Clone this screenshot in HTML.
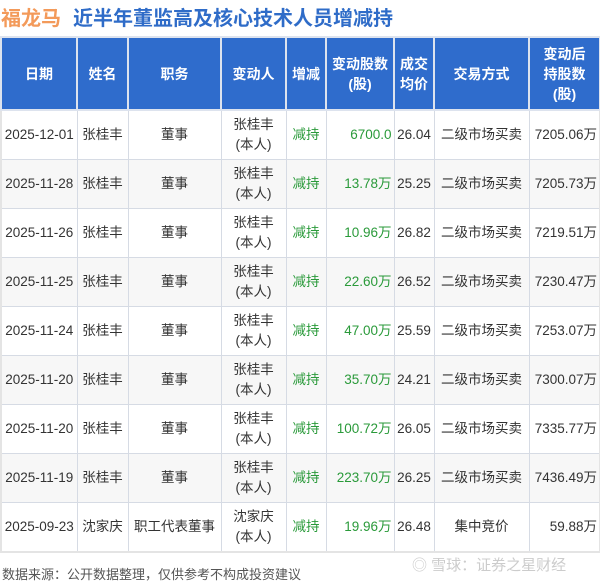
<!DOCTYPE html><html><head><meta charset="utf-8"><style>
body{margin:0;width:600px;height:581px;background:#fff;font-family:"Liberation Sans","Noto Sans CJK SC",sans-serif;position:relative;overflow:hidden}
.t{position:absolute;left:1px;top:2px;font-size:20px;font-weight:bold;color:#2f6cc8;white-space:nowrap}
.t span{color:#f39a5a;margin-right:12px}
table{position:absolute;left:0;top:36px;border-collapse:collapse;table-layout:fixed;width:599px;border:2px solid #e4e4e4}
th{background:#2f6ccc;color:#fff;font-size:14px;font-weight:bold;height:71px;border:2px solid #dde3ee;padding:0;line-height:20px}
td{font-size:13.5px;color:#333;height:48px;border:1px solid #d6dbe4;padding:0 2px;text-align:center;line-height:20px}
tr:nth-child(odd) td{background:#f7f7f7}
.g{color:#2a9a3a}.r{text-align:right}
.f{position:absolute;left:2px;top:564px;font-size:13px;color:#555}
.x{position:absolute;left:412px;top:554px;font-size:15px;color:#ccc}
</style></head><body>
<div class="t"><span>福龙马</span>近半年董监高及核心技术人员增减持</div>
<table>
<colgroup><col style="width:76px"><col style="width:51px"><col style="width:93px"><col style="width:65px"><col style="width:40px"><col style="width:68px"><col style="width:40px"><col style="width:95px"><col style="width:71px"></colgroup>
<tr><th>日期</th><th>姓名</th><th>职务</th><th>变动人</th><th>增减</th><th>变动股数<br>(股)</th><th>成交<br>均价</th><th>交易方式</th><th>变动后<br>持股数<br>(股)</th></tr>
<tr><td>2025-12-01</td><td>张桂丰</td><td>董事</td><td>张桂丰<br>(本人)</td><td class="g">减持</td><td class="g r">6700.0</td><td>26.04</td><td>二级市场买卖</td><td class="r">7205.06万</td></tr>
<tr><td>2025-11-28</td><td>张桂丰</td><td>董事</td><td>张桂丰<br>(本人)</td><td class="g">减持</td><td class="g r">13.78万</td><td>25.25</td><td>二级市场买卖</td><td class="r">7205.73万</td></tr>
<tr><td>2025-11-26</td><td>张桂丰</td><td>董事</td><td>张桂丰<br>(本人)</td><td class="g">减持</td><td class="g r">10.96万</td><td>26.82</td><td>二级市场买卖</td><td class="r">7219.51万</td></tr>
<tr><td>2025-11-25</td><td>张桂丰</td><td>董事</td><td>张桂丰<br>(本人)</td><td class="g">减持</td><td class="g r">22.60万</td><td>26.52</td><td>二级市场买卖</td><td class="r">7230.47万</td></tr>
<tr><td>2025-11-24</td><td>张桂丰</td><td>董事</td><td>张桂丰<br>(本人)</td><td class="g">减持</td><td class="g r">47.00万</td><td>25.59</td><td>二级市场买卖</td><td class="r">7253.07万</td></tr>
<tr><td>2025-11-20</td><td>张桂丰</td><td>董事</td><td>张桂丰<br>(本人)</td><td class="g">减持</td><td class="g r">35.70万</td><td>24.21</td><td>二级市场买卖</td><td class="r">7300.07万</td></tr>
<tr><td>2025-11-20</td><td>张桂丰</td><td>董事</td><td>张桂丰<br>(本人)</td><td class="g">减持</td><td class="g r">100.72万</td><td>26.05</td><td>二级市场买卖</td><td class="r">7335.77万</td></tr>
<tr><td>2025-11-19</td><td>张桂丰</td><td>董事</td><td>张桂丰<br>(本人)</td><td class="g">减持</td><td class="g r">223.70万</td><td>26.25</td><td>二级市场买卖</td><td class="r">7436.49万</td></tr>
<tr><td>2025-09-23</td><td>沈家庆</td><td>职工代表董事</td><td>沈家庆<br>(本人)</td><td class="g">减持</td><td class="g r">19.96万</td><td>26.48</td><td>集中竞价</td><td class="r">59.88万</td></tr>
</table>
<div class="f">数据来源：公开数据整理，仅供参考不构成投资建议</div>
<div class="x">◎ 雪球：证券之星财经</div>
</body></html>
